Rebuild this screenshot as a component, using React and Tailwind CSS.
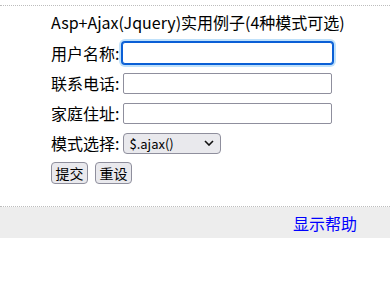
export default function App() {
  const font = { fontFamily: '"Noto Sans CJK SC", "Noto Sans", sans-serif' };
  return (
    <div className="w-[390px] h-[282px] bg-white text-black" style={font}>
      <div className="h-[5px]" />
      <div className="border-t border-dotted border-[#bdbdbd]" />
      <div className="pl-[51px] flex flex-col">
        <div className="h-[32px] flex items-center text-[16px] leading-none">
          Asp+Ajax(Jquery)实用例子(4种模式可选)
        </div>
        <div className="h-[30px] flex items-center gap-[3px] text-[16px]">
          <span>用户名称:</span>
          <input
            className="w-[211px] h-[22px] border border-[#0a5fd6] rounded-[3px] shadow-[0_0_0_1px_#0a5fd6,0_0_0_3px_#bfe1fb] outline-none bg-white"
          />
        </div>
        <div className="h-[30px] flex items-center gap-[3px] text-[16px]">
          <span>联系电话:</span>
          <input className="w-[209px] h-[21px] ml-[1px] border border-[#8f8f9d] rounded-[2px] outline-none bg-white" />
        </div>
        <div className="h-[30px] flex items-center gap-[3px] text-[16px]">
          <span>家庭住址:</span>
          <input className="w-[209px] h-[21px] ml-[1px] border border-[#8f8f9d] rounded-[2px] outline-none bg-white" />
        </div>
        <div className="h-[30px] flex items-center gap-[3px] text-[16px]">
          <span>模式选择:</span>
          <div className="ml-[1px] w-[98px] h-[21px] border border-[#8f8f9d] rounded-[4px] bg-[#e9e9ed] flex items-center justify-between pl-[5px] pr-[6px] text-[13px]">
            <span className="leading-none">$.ajax()</span>
            <svg width="10" height="6" viewBox="0 0 10 6" fill="none">
              <path d="M1 1l4 4 4-4" stroke="#111" strokeWidth="1.6" />
            </svg>
          </div>
        </div>
        <div className="h-[30px] flex items-center gap-[7px]">
          <button className="w-[37px] h-[22px] border border-[#8f8f9d] rounded-[4px] bg-[#e9e9ed] text-[14px] leading-none flex items-center justify-center">
            提交
          </button>
          <button className="w-[37px] h-[22px] border border-[#8f8f9d] rounded-[4px] bg-[#e9e9ed] text-[14px] leading-none flex items-center justify-center">
            重设
          </button>
        </div>
      </div>
      <div className="h-[18px]" />
      <div className="border-t border-dotted border-[#bdbdbd]" />
      <div className="h-[31px] bg-[#ededed] flex items-center justify-end pr-[33px]">
        <span className="text-[16px] text-[#0000ff] leading-none">显示帮助</span>
      </div>
    </div>
  );
}
